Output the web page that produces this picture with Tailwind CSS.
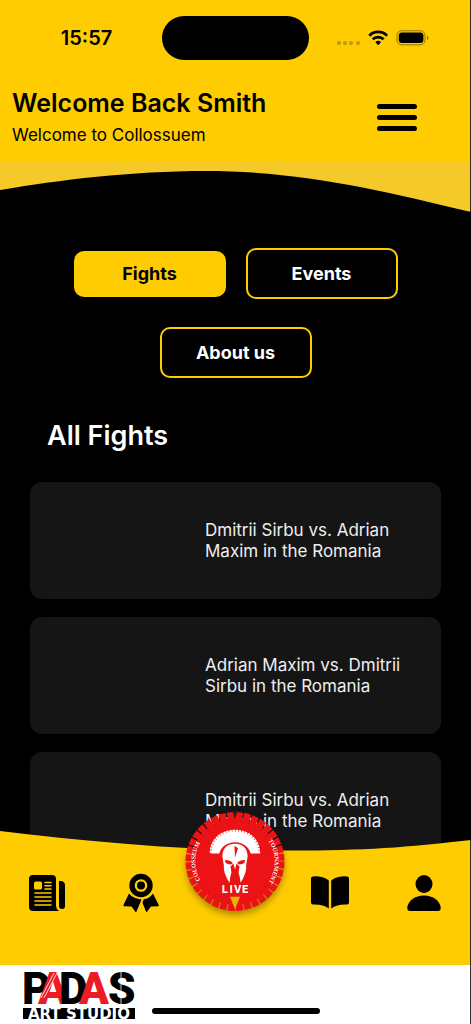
<!doctype html>
<html lang="en-us">

<head>
    <meta charset="utf-8">
    <meta name="viewport" content="width=device-width, initial-scale=1, shrink-to-fit=no">
    <title>Collossuem - All Fights</title>
    <script src="https://cdn.jsdelivr.net/npm/@tailwindcss/browser@4"></script>
</head>
<body class="bg-black antialiased font-['Inter','Liberation_Sans',sans-serif]">
    <div class="relative flex h-dvh flex-col overflow-hidden">
        <header class="shrink-0">
            <div class="bg-[#ffcc02]">
                <!-- status bar -->
                <div class="grid grid-cols-3 items-center pt-4">
                    <span class="pl-4 text-center text-[20px] leading-6 font-semibold">15:57</span>
                    <div class="h-11 w-[147px] justify-self-center rounded-full bg-black"></div>
                    <div class="flex items-center justify-center pr-5">
                        <svg class="h-4 w-[92px]" viewBox="0 0 92 16" aria-hidden="true">
                            <g fill="#c39b02">
                                <rect x="0" y="11" width="4" height="4" rx="1.5" />
                                <rect x="6" y="11" width="4" height="4" rx="1.5" />
                                <rect x="12" y="11" width="4" height="4" rx="1.5" />
                                <rect x="19" y="11" width="4" height="4" rx="1.5" />
                            </g>
                            <g fill="none" stroke="#000" stroke-width="2.7">
                                <path d="M32.3 5.7a12.4 12.4 0 0 1 17.8 0" />
                                <path d="M35.7 9.3a7.8 7.8 0 0 1 11 0" />
                            </g>
                            <path d="M41.2 15.2l-2.8-3a4 4 0 0 1 5.6 0z" />
                            <rect x="60" y=".8" width="28" height="14" rx="4.5" fill="none" stroke="#8f7302" />
                            <rect x="61.8" y="2.5" width="24.6" height="10.6" rx="3" />
                            <path d="M90 5.6c2 .8 2 3.8 0 4.6z" fill="#8f7302" />
                        </svg>
                    </div>
                </div>
                <div class="flex items-center justify-between pt-[27px] pb-[14px] pl-3">
                    <div>
                        <h1 class="text-[25px] leading-8 font-semibold">Welcome Back Smith</h1>
                        <p class="pt-1 text-[17px] leading-6">Welcome to Collossuem</p>
                    </div>
                    <button type="button" aria-label="Menu" class="mr-[54px] flex w-10 flex-col gap-[6px]">
                        <span class="h-[5px] w-full rounded-full bg-black"></span>
                        <span class="h-[5px] w-full rounded-full bg-black"></span>
                        <span class="h-[5px] w-full rounded-full bg-black"></span>
                    </button>
                </div>
            </div>
            <svg class="block h-[51px] w-full" viewBox="0 0 470 51" preserveAspectRatio="none" aria-hidden="true">
                <path fill="#f5ca28" d="M0 0H470V51C380 29 300 10 205 10C130 10 60 19 0 29Z" />
            </svg>
        </header>

        <main class="min-h-0 flex-1 overflow-hidden px-[30px] pt-9 text-white">
            <div class="flex flex-wrap items-center justify-center gap-x-5 gap-y-7">
                <button type="button" class="h-[46px] w-[152px] rounded-[10px] bg-[#ffcc02] text-[18px] font-bold text-black">Fights</button>
                <button type="button" class="h-[51px] w-[152px] rounded-[10px] border-2 border-[#ffcc02] text-[18px] font-bold">Events</button>
                <button type="button" class="h-[51px] w-[152px] rounded-[10px] border-2 border-[#ffcc02] text-[18px] font-bold">About us</button>
            </div>

            <h2 class="pt-10 pl-[17px] text-[27px] leading-9 font-semibold">All Fights</h2>

            <ul class="mt-7 flex flex-col gap-[18px] text-[17px] leading-[21px] text-[#eee]">
                <li class="flex h-[117px] items-center rounded-xl bg-[#151515] pr-7 pl-[175px]">Dmitrii Sirbu vs. Adrian Maxim in the Romania</li>
                <li class="flex h-[117px] items-center rounded-xl bg-[#151515] pr-7 pl-[175px]">Adrian Maxim vs. Dmitrii Sirbu in the Romania</li>
                <li class="flex h-[117px] items-center rounded-xl bg-[#151515] pr-7 pl-[175px]">Dmitrii Sirbu vs. Adrian Maxim in the Romania</li>
            </ul>
        </main>

        <nav class="relative z-10 -mt-6 shrink-0">
            <svg class="block h-6 w-full" viewBox="0 0 470 24" preserveAspectRatio="none" aria-hidden="true">
                <path fill="#ffcc02" d="M0 2C90 13 180 21 270 21.5S400 19 470 11V24H0Z" />
            </svg>
            <div class="grid h-28 grid-cols-5 justify-items-center bg-[#ffcc02] pt-5">
                <a href="#" aria-label="News">
                    <svg class="h-10 w-10" viewBox="0 0 40 40">
                        <path d="M6 2H25Q29 2 29 6V33Q29 36 32 38H6Q2 38 2 34V6Q2 2 6 2Z" />
                        <path d="M32 8h1.5q4.500 0 4.500 4.500V33a3 3 0 0 1-6 0z" />
                        <g fill="none" stroke="#ffcc02" stroke-width="1.6" stroke-linecap="round">
                            <path d="M18 9.5h6M18 12.8h6M18 16h6M8 20h16M8 24h16M8 28h16M8 32h16" />
                        </g>
                        <rect x="7" y="8.5" width="8" height="8" rx="1.5" fill="#ffcc02" />
                    </svg>
                </a>
                <a href="#" aria-label="Awards">
                    <svg class="h-10 w-10" viewBox="0 0 40 40">
                        <circle cx="20" cy="12.5" r="9" fill="none" stroke="#000" stroke-width="5.4" />
                        <circle cx="20" cy="12.5" r="4" />
                        <path d="M8 20.5Q12 25.5 20.5 26.5L15.5 38.5Q15 39.5 14.2 38.5L10.5 33.5 3 33.3Q2 33 2.5 32Z" />
                        <path d="M32 20.5Q28.5 25.5 22.8 26.3L21.5 29.7 25 38.5Q25.5 39.5 26.2 38.5L30 33.5 37.3 33.3Q38.2 33 37.7 32Z" />
                    </svg>
                </a>
                <a href="#" aria-label="Live" class="relative h-10 w-10">
                    <svg class="absolute -top-[62px] left-1/2 h-[102px] w-[102px] -translate-x-1/2 overflow-visible drop-shadow-[0_4px_3px_rgba(0,0,0,0.35)]" viewBox="0 0 101 101">
                        <circle cx="50.5" cy="50" r="43" fill="#ed1216" />
                        <circle cx="50.5" cy="50" r="45" fill="none" stroke="#ed1216" stroke-width="8" stroke-dasharray="6.7 1.154" />
                        <circle cx="50.5" cy="50" r="40" fill="none" stroke="#c40f13" stroke-width="4" stroke-dasharray=".5 6.481" stroke-dashoffset="-6.2" />
                        <path fill="#222" d="M47.5 0h6l-3 6z" />
                        <path fill="#fff" d="M25.5 42C25.5 28 36 18.5 50.5 18.5S75.5 28 75.5 42H66C64 35 58 31 50.5 31S37 35 35 42Z" />
                        <path fill="none" stroke="#ed1216" stroke-width="4" stroke-dasharray=".6 2.6" d="M25.5 42C25.5 28 36 18.5 50.5 18.5S75.5 28 75.5 42" />
                        <!-- helmet -->
                        <path fill="#fff" d="M38 45C38 37 43 32.5 50.5 32.5S63 37 63 45L61.5 54Q62.5 61 56 71Q55.500 65 54 61L55 55 52 52 50.5 58 49 52 46 55 47 61Q45.500 65 45 71Q38.500 61 39.500 54Z" />
                        <path fill="#ed1216" d="M40.5 48.5Q46 48.500 48.500 51.500L46.500 53Q42.500 53 41 51ZM60.500 48.500Q55 48.500 52.500 51.500L54.500 53Q58.500 53 60 51ZM50 34.500L53.500 37 50.500 46Z" />
                        <text y="81" x="37.5 45 49.5 57.5" fill="#fff" class="font-['Roboto',sans-serif] text-[11px] font-black">LIVE</text>
                        <path id="arcLeft" fill="none" d="M20 74A37 37 0 0 1 20 26" />
                        <path id="arcRight" fill="none" d="M81 26A37 37 0 0 1 81 74" />
                        <text fill="#fff" text-anchor="middle" class="font-['Liberation_Serif',serif] text-[6px] font-bold"><textPath href="#arcLeft" startOffset="50%">COLOSSEUM</textPath></text>
                        <text fill="#fff" text-anchor="middle" class="font-['Liberation_Serif',serif] text-[6px] font-bold"><textPath href="#arcRight" startOffset="50%">TOURNAMENT</textPath></text>
                        <path fill="#e5b702" d="M45.5 85h10l-5 12z" />
                    </svg>
                </a>
                <a href="#" aria-label="Library">
                    <svg class="h-10 w-10" viewBox="0 0 40 40">
                        <path d="M18.8 7.5V35.5Q13 31 3 31.5Q1 31.5 1 29.5V5.5Q1 3.5 3 3.4Q13 3 18.8 7.5Z" />
                        <path d="M21.2 7.5V35.5Q27 31 37 31.5Q39 31.5 39 29.5V5.5Q39 3.5 37 3.4Q27 3 21.2 7.5Z" />
                    </svg>
                </a>
                <a href="#" aria-label="Profile">
                    <svg class="h-10 w-10" viewBox="0 0 40 40">
                        <ellipse cx="20" cy="11" rx="8.5" ry="9" />
                        <path d="M20 22.5C29 22.5 36 28 36.7 34.5Q36.8 38 34 38H6Q3.2 38 3.3 34.5C4 28 11 22.5 20 22.5Z" />
                    </svg>
                </a>
            </div>
        </nav>

        <footer class="relative flex h-[59px] shrink-0 items-start bg-white pl-[23px]">
            <svg class="mt-1 h-[50px] w-[114px] overflow-visible" viewBox="0 0 114 50" role="img" aria-label="Padas Art Studio">
                <text x="-1 15 36 56 85" y="35" class="font-['Roboto',sans-serif] text-[44px] font-black">P<tspan fill="#ed1c24">A</tspan>D<tspan fill="#ed1c24">A</tspan>S</text>
                <path stroke="#fff" stroke-width=".8" d="M18 29L31 4M21 29L34 4M98 3V35" />
                <rect y="39" width="112" height="11" />
                <text x="56" y="50" fill="#fff" text-anchor="middle" class="font-['DejaVu_Sans',sans-serif] text-[15px] font-bold">ART STUDIO</text>
            </svg>
            <div class="absolute bottom-[10px] left-1/2 h-[6px] w-[168px] -translate-x-1/2 rounded-full bg-black"></div>
        </footer>

        <!-- screen edge -->
        <div class="pointer-events-none absolute inset-y-0 right-0 z-20 w-px bg-black/80"></div>
    </div>
</body>
</html>
